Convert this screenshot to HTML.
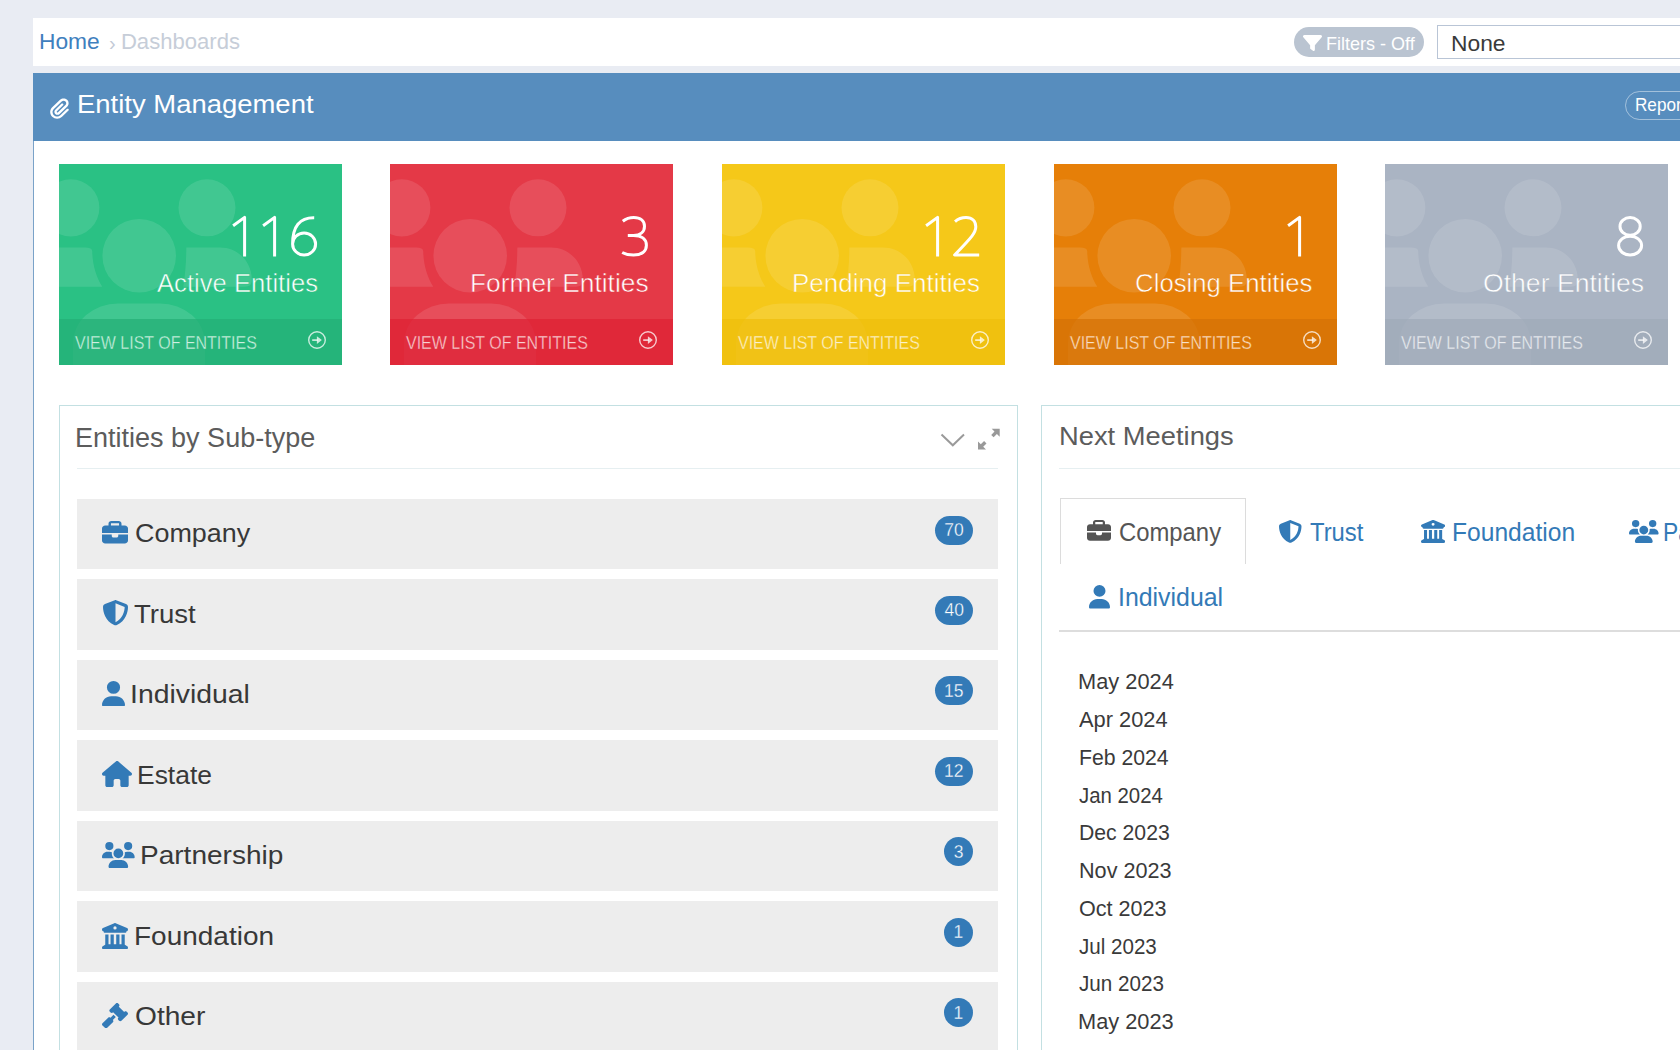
<!DOCTYPE html>
<html><head><meta charset="utf-8"><style>
html,body{margin:0;padding:0;}
body{width:1680px;height:1050px;overflow:hidden;position:relative;background:#e9ecf3;font-family:"Liberation Sans",sans-serif;}
.t{position:absolute;white-space:nowrap;}
</style></head><body>
<div style="position:absolute;left:33px;top:18px;width:1647px;height:48px;background:#fff"></div>
<div class="t" style="left:38.68px;top:30.80px;font-size:22.09px;line-height:22.09px;color:#3f80be;font-weight:400;transform:scaleX(1.0318);transform-origin:0 0;">Home</div>
<div class="t" style="left:109.10px;top:32.57px;font-size:20.00px;line-height:20.00px;color:#c3cad6;font-weight:400;">›</div>
<div class="t" style="left:120.93px;top:30.80px;font-size:22.09px;line-height:22.09px;color:#c6cdd8;font-weight:400;">Dashboards</div>
<div style="position:absolute;left:1294px;top:27px;width:130px;height:30px;background:#bac4d1;border-radius:15px"></div>
<svg style="position:absolute;left:1303px;top:35px;" width="19" height="16" viewBox="0 32 512 448" preserveAspectRatio="none"><path fill="#fff" d="M3.9 54.9C10.5 40.9 24.5 32 40 32H472c15.5 0 29.5 8.9 36.1 22.9s4.6 30.5-5.2 42.5L320 320.9V448c0 12.1-6.8 23.2-17.7 28.6s-23.8 4.3-33.5-3l-64-48c-8.1-6-12.8-15.5-12.8-25.6V320.9L9 97.3C-.7 85.4-2.8 68.8 3.9 54.9z"/></svg>
<div class="t" style="left:1326.16px;top:33.88px;font-size:19.04px;line-height:19.04px;color:#fff;font-weight:400;transform:scaleX(0.9464);transform-origin:0 0;">Filters - Off</div>
<div style="position:absolute;left:1437px;top:25px;width:260px;height:34px;background:#fff;border:1px solid #b9c5d6;box-sizing:border-box"></div>
<div class="t" style="left:1451.27px;top:32.53px;font-size:22.53px;line-height:22.53px;color:#3a3a3a;font-weight:400;transform:scaleX(1.0132);transform-origin:0 0;">None</div>
<div style="position:absolute;left:33px;top:73px;width:1660px;height:1000px;background:#fff;border-left:1px solid #7aa2c8;box-sizing:border-box"></div>
<div style="position:absolute;left:33px;top:73px;width:1660px;height:68px;background:#578dbe"></div>
<svg style="position:absolute;left:50.3px;top:97.6px;" width="19" height="21" viewBox="0 0 448 512" preserveAspectRatio="none"><path fill="#fff" d="M364.2 83.8c-24.4-24.4-64-24.4-88.4 0l-184 184c-42.1 42.1-42.1 110.3 0 152.4s110.3 42.1 152.4 0l152-152c10.9-10.9 28.7-10.9 39.6 0s10.9 28.7 0 39.6l-152 152c-64 64-167.6 64-231.6 0s-64-167.6 0-231.6l184-184c46.3-46.3 121.3-46.3 167.6 0s46.3 121.3 0 167.6l-176 176c-28.6 28.6-75 28.6-103.6 0s-28.6-75 0-103.6l144-144c10.9-10.9 28.7-10.9 39.6 0s10.9 28.7 0 39.6l-144 144c-6.7 6.7-6.7 17.7 0 24.4s17.7 6.7 24.4 0l176-176c24.4-24.4 24.4-64 0-88.4z"/></svg>
<div class="t" style="left:77.20px;top:91.65px;font-size:25.58px;line-height:25.58px;color:#fff;font-weight:400;transform:scaleX(1.0733);transform-origin:0 0;">Entity Management</div>
<div style="position:absolute;left:1625px;top:91px;width:120px;height:29px;border:1px solid rgba(255,255,255,.45);border-radius:15px;box-sizing:border-box"></div>
<div class="t" style="left:1635.13px;top:95.38px;font-size:19.04px;line-height:19.04px;color:#fff;font-weight:400;transform:scaleX(0.9000);transform-origin:0 0;">Report</div>
<div style="position:absolute;left:59px;top:164px;width:283px;height:201px;background:#2ac184;overflow:hidden"><svg style="position:absolute;left:0;top:0" width="283" height="201" viewBox="0 0 283 201"><circle cx="11.8" cy="43.8" r="28.6" fill="rgba(255,255,255,0.11)"/><circle cx="148" cy="43.8" r="28.5" fill="rgba(255,255,255,0.11)"/><circle cx="80.2" cy="91.8" r="36.8" fill="rgba(255,255,255,0.11)"/><path fill="rgba(255,255,255,0.11)" d="M-60 83.5H26Q33.2 83.5 33.2 87C33.4 100 37 113 43.3 122.7H-60Z"/><path fill="rgba(255,255,255,0.11)" d="M127.3 83.5H161C180 83.5 192.8 99 192.8 115V116.5Q192.8 122.7 186 122.7H124.3C126.3 110 127.3 97 127.3 83.5Z"/><path fill="rgba(255,255,255,0.11)" d="M14 260V179.4A45 40 0 0 1 59 139.4H101A45 40 0 0 1 146 179.4V260Z"/></svg><div style="position:absolute;left:0;top:155px;width:283px;height:46px;background:rgba(36,174,118,0.72)"></div></div>
<div class="t" style="left:156.70px;top:271.02px;font-size:25.73px;line-height:25.73px;color:#fff;font-weight:400;transform:scaleX(0.9965);transform-origin:0 0;-webkit-text-stroke:0.5px #2ac184;">Active Entities</div>
<div class="t" style="left:74.92px;top:333.55px;font-size:18.60px;line-height:18.60px;color:rgba(255,255,255,0.8);font-weight:400;transform:scaleX(0.8600);transform-origin:0 0;-webkit-text-stroke:0.4px #2ac184;">VIEW LIST OF ENTITIES</div>
<svg style="position:absolute;left:307px;top:329.8px;" width="20" height="20" viewBox="0 0 20 20" preserveAspectRatio="none"><circle cx="10" cy="10" r="8.3" fill="none" stroke="rgba(255,255,255,0.75)" stroke-width="1.4"/><path d="M5.2 10.1H10.8" stroke="rgba(255,255,255,0.75)" stroke-width="1.7"/><path d="M9.9 6.3L14.9 10.1L9.9 14.1Z" fill="rgba(255,255,255,0.75)"/></svg>
<div style="position:absolute;left:390px;top:164px;width:282.5px;height:201px;background:#e43947;overflow:hidden"><svg style="position:absolute;left:0;top:0" width="283" height="201" viewBox="0 0 283 201"><circle cx="11.8" cy="43.8" r="28.6" fill="rgba(255,255,255,0.11)"/><circle cx="148" cy="43.8" r="28.5" fill="rgba(255,255,255,0.11)"/><circle cx="80.2" cy="91.8" r="36.8" fill="rgba(255,255,255,0.11)"/><path fill="rgba(255,255,255,0.11)" d="M-60 83.5H26Q33.2 83.5 33.2 87C33.4 100 37 113 43.3 122.7H-60Z"/><path fill="rgba(255,255,255,0.11)" d="M127.3 83.5H161C180 83.5 192.8 99 192.8 115V116.5Q192.8 122.7 186 122.7H124.3C126.3 110 127.3 97 127.3 83.5Z"/><path fill="rgba(255,255,255,0.11)" d="M14 260V179.4A45 40 0 0 1 59 139.4H101A45 40 0 0 1 146 179.4V260Z"/></svg><div style="position:absolute;left:0;top:155px;width:283px;height:46px;background:rgba(222,33,53,0.72)"></div></div>
<div class="t" style="left:470.29px;top:271.02px;font-size:25.73px;line-height:25.73px;color:#fff;font-weight:400;transform:scaleX(1.0241);transform-origin:0 0;-webkit-text-stroke:0.5px #e43947;">Former Entities</div>
<div class="t" style="left:405.92px;top:333.55px;font-size:18.60px;line-height:18.60px;color:rgba(255,255,255,0.8);font-weight:400;transform:scaleX(0.8600);transform-origin:0 0;-webkit-text-stroke:0.4px #e43947;">VIEW LIST OF ENTITIES</div>
<svg style="position:absolute;left:638px;top:329.8px;" width="20" height="20" viewBox="0 0 20 20" preserveAspectRatio="none"><circle cx="10" cy="10" r="8.3" fill="none" stroke="rgba(255,255,255,0.75)" stroke-width="1.4"/><path d="M5.2 10.1H10.8" stroke="rgba(255,255,255,0.75)" stroke-width="1.7"/><path d="M9.9 6.3L14.9 10.1L9.9 14.1Z" fill="rgba(255,255,255,0.75)"/></svg>
<div style="position:absolute;left:722px;top:164px;width:283px;height:201px;background:#f5c819;overflow:hidden"><svg style="position:absolute;left:0;top:0" width="283" height="201" viewBox="0 0 283 201"><circle cx="11.8" cy="43.8" r="28.6" fill="rgba(255,255,255,0.11)"/><circle cx="148" cy="43.8" r="28.5" fill="rgba(255,255,255,0.11)"/><circle cx="80.2" cy="91.8" r="36.8" fill="rgba(255,255,255,0.11)"/><path fill="rgba(255,255,255,0.11)" d="M-60 83.5H26Q33.2 83.5 33.2 87C33.4 100 37 113 43.3 122.7H-60Z"/><path fill="rgba(255,255,255,0.11)" d="M127.3 83.5H161C180 83.5 192.8 99 192.8 115V116.5Q192.8 122.7 186 122.7H124.3C126.3 110 127.3 97 127.3 83.5Z"/><path fill="rgba(255,255,255,0.11)" d="M14 260V179.4A45 40 0 0 1 59 139.4H101A45 40 0 0 1 146 179.4V260Z"/></svg><div style="position:absolute;left:0;top:155px;width:283px;height:46px;background:rgba(238,190,11,0.72)"></div></div>
<div class="t" style="left:792.32px;top:271.02px;font-size:25.73px;line-height:25.73px;color:#fff;font-weight:400;transform:scaleX(1.0108);transform-origin:0 0;-webkit-text-stroke:0.5px #f5c819;">Pending Entities</div>
<div class="t" style="left:737.92px;top:333.55px;font-size:18.60px;line-height:18.60px;color:rgba(255,255,255,0.8);font-weight:400;transform:scaleX(0.8600);transform-origin:0 0;-webkit-text-stroke:0.4px #f5c819;">VIEW LIST OF ENTITIES</div>
<svg style="position:absolute;left:970px;top:329.8px;" width="20" height="20" viewBox="0 0 20 20" preserveAspectRatio="none"><circle cx="10" cy="10" r="8.3" fill="none" stroke="rgba(255,255,255,0.75)" stroke-width="1.4"/><path d="M5.2 10.1H10.8" stroke="rgba(255,255,255,0.75)" stroke-width="1.7"/><path d="M9.9 6.3L14.9 10.1L9.9 14.1Z" fill="rgba(255,255,255,0.75)"/></svg>
<div style="position:absolute;left:1054px;top:164px;width:283px;height:201px;background:#e67f08;overflow:hidden"><svg style="position:absolute;left:0;top:0" width="283" height="201" viewBox="0 0 283 201"><circle cx="11.8" cy="43.8" r="28.6" fill="rgba(255,255,255,0.11)"/><circle cx="148" cy="43.8" r="28.5" fill="rgba(255,255,255,0.11)"/><circle cx="80.2" cy="91.8" r="36.8" fill="rgba(255,255,255,0.11)"/><path fill="rgba(255,255,255,0.11)" d="M-60 83.5H26Q33.2 83.5 33.2 87C33.4 100 37 113 43.3 122.7H-60Z"/><path fill="rgba(255,255,255,0.11)" d="M127.3 83.5H161C180 83.5 192.8 99 192.8 115V116.5Q192.8 122.7 186 122.7H124.3C126.3 110 127.3 97 127.3 83.5Z"/><path fill="rgba(255,255,255,0.11)" d="M14 260V179.4A45 40 0 0 1 59 139.4H101A45 40 0 0 1 146 179.4V260Z"/></svg><div style="position:absolute;left:0;top:155px;width:283px;height:46px;background:rgba(212,114,5,0.72)"></div></div>
<div class="t" style="left:1135.12px;top:271.02px;font-size:25.73px;line-height:25.73px;color:#fff;font-weight:400;-webkit-text-stroke:0.5px #e67f08;">Closing Entities</div>
<div class="t" style="left:1069.92px;top:333.55px;font-size:18.60px;line-height:18.60px;color:rgba(255,255,255,0.8);font-weight:400;transform:scaleX(0.8600);transform-origin:0 0;-webkit-text-stroke:0.4px #e67f08;">VIEW LIST OF ENTITIES</div>
<svg style="position:absolute;left:1302px;top:329.8px;" width="20" height="20" viewBox="0 0 20 20" preserveAspectRatio="none"><circle cx="10" cy="10" r="8.3" fill="none" stroke="rgba(255,255,255,0.75)" stroke-width="1.4"/><path d="M5.2 10.1H10.8" stroke="rgba(255,255,255,0.75)" stroke-width="1.7"/><path d="M9.9 6.3L14.9 10.1L9.9 14.1Z" fill="rgba(255,255,255,0.75)"/></svg>
<div style="position:absolute;left:1385px;top:164px;width:283px;height:201px;background:#aab4c3;overflow:hidden"><svg style="position:absolute;left:0;top:0" width="283" height="201" viewBox="0 0 283 201"><circle cx="11.8" cy="43.8" r="28.6" fill="rgba(255,255,255,0.11)"/><circle cx="148" cy="43.8" r="28.5" fill="rgba(255,255,255,0.11)"/><circle cx="80.2" cy="91.8" r="36.8" fill="rgba(255,255,255,0.11)"/><path fill="rgba(255,255,255,0.11)" d="M-60 83.5H26Q33.2 83.5 33.2 87C33.4 100 37 113 43.3 122.7H-60Z"/><path fill="rgba(255,255,255,0.11)" d="M127.3 83.5H161C180 83.5 192.8 99 192.8 115V116.5Q192.8 122.7 186 122.7H124.3C126.3 110 127.3 97 127.3 83.5Z"/><path fill="rgba(255,255,255,0.11)" d="M14 260V179.4A45 40 0 0 1 59 139.4H101A45 40 0 0 1 146 179.4V260Z"/></svg><div style="position:absolute;left:0;top:155px;width:283px;height:46px;background:rgba(159,170,185,0.72)"></div></div>
<div class="t" style="left:1483.00px;top:271.02px;font-size:25.73px;line-height:25.73px;color:#fff;font-weight:400;transform:scaleX(1.0342);transform-origin:0 0;-webkit-text-stroke:0.5px #aab4c3;">Other Entities</div>
<div class="t" style="left:1400.92px;top:333.55px;font-size:18.60px;line-height:18.60px;color:rgba(255,255,255,0.8);font-weight:400;transform:scaleX(0.8600);transform-origin:0 0;-webkit-text-stroke:0.4px #aab4c3;">VIEW LIST OF ENTITIES</div>
<svg style="position:absolute;left:1633px;top:329.8px;" width="20" height="20" viewBox="0 0 20 20" preserveAspectRatio="none"><circle cx="10" cy="10" r="8.3" fill="none" stroke="rgba(255,255,255,0.75)" stroke-width="1.4"/><path d="M5.2 10.1H10.8" stroke="rgba(255,255,255,0.75)" stroke-width="1.7"/><path d="M9.9 6.3L14.9 10.1L9.9 14.1Z" fill="rgba(255,255,255,0.75)"/></svg>
<svg style="position:absolute;left:230.10px;top:214.00px" width="32" height="46" viewBox="-2 -2 32 46"><path d="M1.1 9.8L12.6 1.4V40.6" fill="none" stroke="#fff" stroke-width="3.0" stroke-linejoin="round"/></svg>
<svg style="position:absolute;left:260.20px;top:214.00px" width="32" height="46" viewBox="-2 -2 32 46"><path d="M1.1 9.8L12.6 1.4V40.6" fill="none" stroke="#fff" stroke-width="3.0" stroke-linejoin="round"/></svg>
<svg style="position:absolute;left:288.50px;top:214.00px" width="32" height="46" viewBox="-2 -2 32 46"><path d="M23.2 1.7C8.5 1.5 1.6 10.5 1.6 28.0M1.6 28.0A11.5 11.0 0 1 0 24.6 28.0A11.5 11.0 0 1 0 1.6 28.0" fill="none" stroke="#fff" stroke-width="3.0" stroke-linejoin="round"/></svg>
<svg style="position:absolute;left:618.60px;top:214.00px" width="32" height="46" viewBox="-2 -2 32 46"><path d="M1.8 5.3C5.0 2.8 8.5 1.6 12.8 1.6C19.5 1.6 23.5 5.0 23.5 10.3C23.5 15.8 19.3 19.4 12.5 19.4H6.8M12.5 19.4C21.0 19.4 25.4 23.5 25.4 29.2C25.4 35.5 20.5 39.0 12.5 39.0C8.0 39.0 4.3 38.2 1.2 36.5" fill="none" stroke="#fff" stroke-width="3.0" stroke-linejoin="round"/></svg>
<svg style="position:absolute;left:923.30px;top:214.00px" width="32" height="46" viewBox="-2 -2 32 46"><path d="M1.1 9.8L12.6 1.4V40.6" fill="none" stroke="#fff" stroke-width="3.0" stroke-linejoin="round"/></svg>
<svg style="position:absolute;left:950.70px;top:214.00px" width="32" height="46" viewBox="-2 -2 32 46"><path d="M2.0 5.6C5.0 3.0 8.8 1.6 13.0 1.6C19.3 1.6 22.8 5.3 22.8 10.8C22.8 16.5 19.5 20.5 1.6 39.0H26.2" fill="none" stroke="#fff" stroke-width="3.0" stroke-linejoin="round"/></svg>
<svg style="position:absolute;left:1285.30px;top:214.00px" width="32" height="46" viewBox="-2 -2 32 46"><path d="M1.1 9.8L12.6 1.4V40.6" fill="none" stroke="#fff" stroke-width="3.0" stroke-linejoin="round"/></svg>
<svg style="position:absolute;left:1615.00px;top:214.00px" width="32" height="46" viewBox="-2 -2 32 46"><path d="M13.1 1.6A10.1 8.8 0 1 1 13.1 19.2A10.1 8.8 0 1 1 13.1 1.6M13.1 20.2A11.5 9.4 0 1 1 13.1 39.0A11.5 9.4 0 1 1 13.1 20.2" fill="none" stroke="#fff" stroke-width="3.0" stroke-linejoin="round"/></svg>
<div style="position:absolute;left:59px;top:405px;width:959px;height:700px;border:1px solid #c3e0e2;box-sizing:border-box;background:#fff"></div>
<div class="t" style="left:74.84px;top:422.51px;font-size:28.34px;line-height:28.34px;color:#5c5c5c;font-weight:400;transform:scaleX(0.9535);transform-origin:0 0;">Entities by Sub-type</div>
<div style="position:absolute;left:77px;top:468px;width:921px;height:1px;background:#e6eff1"></div>
<svg style="position:absolute;left:938px;top:430px;" width="30" height="20" viewBox="938 430 30 20" preserveAspectRatio="none"><path d="M941.5 434.5L952.8 445.3L964 434.5" fill="none" stroke="#9a9a9a" stroke-width="2"/></svg>
<svg style="position:absolute;left:976px;top:426px;" width="26" height="26" viewBox="976 426 26 26" preserveAspectRatio="none"><path fill="#999" d="M978 441.5V449.5H986L983.2 446.7L986.5 443.4L984.1 441L980.8 444.3Z M999.7 428.8V436.8L996.9 434L993.6 437.3L991.2 434.9L994.5 431.6L991.7 428.8Z"/></svg>
<div style="position:absolute;left:77px;top:499.00px;width:921px;height:70.4px;background:#ededed"></div>
<svg style="position:absolute;left:102px;top:521px;" width="26" height="24" viewBox="0 0 512 512" preserveAspectRatio="none"><path fill="#337ab7" d="M184 48H328c4.4 0 8 3.6 8 8V96H176V56c0-4.4 3.6-8 8-8zm-56 8V96H64C28.7 96 0 124.7 0 160v96H192 320 512V160c0-35.3-28.7-64-64-64H384V56c0-30.9-25.1-56-56-56H184c-30.9 0-56 25.1-56 56zM512 288H320v32c0 17.7-14.3 32-32 32H224c-17.7 0-32-14.3-32-32V288H0V416c0 35.3 28.7 64 64 64H448c35.3 0 64-28.7 64-64V288z"/></svg>
<div class="t" style="left:134.85px;top:520.43px;font-size:26.60px;line-height:26.60px;color:#383838;font-weight:400;transform:scaleX(1.0114);transform-origin:0 0;">Company</div>
<div style="position:absolute;left:935px;top:515.5px;width:38px;height:29px;border-radius:14.5px;background:#337ab7"></div>
<div class="t" style="left:944.16px;top:521.89px;font-size:17.50px;line-height:17.50px;color:#fff;font-weight:400;-webkit-text-stroke:0.3px #337ab7;">70</div>
<div style="position:absolute;left:77px;top:579.45px;width:921px;height:70.4px;background:#ededed"></div>
<svg style="position:absolute;left:102.5px;top:600px;" width="25" height="25.5" viewBox="16 0 480 512" preserveAspectRatio="none"><path fill="#337ab7" d="M256 0c4.6 0 9.2 1 13.4 2.9L457.7 82.8c22 9.3 38.4 31 38.3 57.2c-.5 99.2-41.3 280.7-213.6 363.2c-16.7 8-36.1 8-52.8 0C57.3 420.7 16.5 239.2 16 140c-.1-26.2 16.3-47.9 38.3-57.2L242.7 2.9C246.8 1 251.4 0 256 0zm0 66.8V444.8C394 378 431.1 230.1 432 141.4L256 66.8l0 0z"/></svg>
<div class="t" style="left:134.45px;top:600.88px;font-size:26.60px;line-height:26.60px;color:#383838;font-weight:400;transform:scaleX(1.0354);transform-origin:0 0;">Trust</div>
<div style="position:absolute;left:935px;top:596.0px;width:38px;height:29px;border-radius:14.5px;background:#337ab7"></div>
<div class="t" style="left:944.42px;top:602.34px;font-size:17.50px;line-height:17.50px;color:#fff;font-weight:400;-webkit-text-stroke:0.3px #337ab7;">40</div>
<div style="position:absolute;left:77px;top:659.90px;width:921px;height:70.4px;background:#ededed"></div>
<svg style="position:absolute;left:102px;top:680.7px;" width="23" height="25.5" viewBox="0 0 448 512" preserveAspectRatio="none"><path fill="#337ab7" d="M224 256A128 128 0 1 0 224 0a128 128 0 1 0 0 256zm-45.7 48C79.8 304 0 383.8 0 482.3C0 498.7 13.3 512 29.7 512H418.3c16.4 0 29.7-13.3 29.7-29.7C448 383.8 368.2 304 269.7 304H178.3z"/></svg>
<div class="t" style="left:130.35px;top:681.33px;font-size:26.60px;line-height:26.60px;color:#383838;font-weight:400;transform:scaleX(1.0660);transform-origin:0 0;">Individual</div>
<div style="position:absolute;left:935px;top:676.4px;width:38px;height:29px;border-radius:14.5px;background:#337ab7"></div>
<div class="t" style="left:943.98px;top:682.79px;font-size:17.50px;line-height:17.50px;color:#fff;font-weight:400;-webkit-text-stroke:0.3px #337ab7;">15</div>
<div style="position:absolute;left:77px;top:740.35px;width:921px;height:70.4px;background:#ededed"></div>
<svg style="position:absolute;left:102px;top:761.3px;" width="30" height="26.2" viewBox="0 0 576 512" preserveAspectRatio="none"><path fill="#337ab7" d="M575.8 255.5c0 18-15 32.1-32 32.1h-32l.7 160.2c0 2.7-.2 5.4-.5 8.1V472c0 22.1-17.9 40-40 40H456c-1.1 0-2.2 0-3.3-.1c-1.4 .1-2.8 .1-4.2 .1H416 392c-22.1 0-40-17.9-40-40V448 384c0-17.7-14.3-32-32-32H256c-17.7 0-32 14.3-32 32v64 24c0 22.1-17.9 40-40 40H160 128.1c-1.5 0-3-.1-4.5-.2c-1.2 .1-2.4 .2-3.6 .2H104c-22.1 0-40-17.9-40-40V360c0-.9 0-1.9 .1-2.8V287.6H32c-18 0-32-14-32-32.1c0-9 3-17 10-24L266.4 8c7-7 15-8 22-8s15 2 21 7L564.8 231.5c8 7 12 15 11 24z"/></svg>
<div class="t" style="left:137.48px;top:761.78px;font-size:26.60px;line-height:26.60px;color:#383838;font-weight:400;transform:scaleX(0.9947);transform-origin:0 0;">Estate</div>
<div style="position:absolute;left:935px;top:756.9px;width:38px;height:29px;border-radius:14.5px;background:#337ab7"></div>
<div class="t" style="left:944.07px;top:763.24px;font-size:17.50px;line-height:17.50px;color:#fff;font-weight:400;-webkit-text-stroke:0.3px #337ab7;">12</div>
<div style="position:absolute;left:77px;top:820.80px;width:921px;height:70.4px;background:#ededed"></div>
<svg style="position:absolute;left:102px;top:841.7px;" width="32.7" height="26" viewBox="0 0 640 512" preserveAspectRatio="none"><path fill="#337ab7" d="M144 0a80 80 0 1 1 0 160A80 80 0 1 1 144 0zM512 0a80 80 0 1 1 0 160A80 80 0 1 1 512 0zM0 298.7C0 239.8 47.8 192 106.7 192h42.7c15.9 0 31 3.5 44.6 9.7c-1.3 7.2-1.9 14.7-1.9 22.3c0 38.2 16.8 72.5 43.3 96c-.2 0-.4 0-.7 0H21.3C9.6 320 0 310.4 0 298.7zM405.3 320c-.2 0-.4 0-.7 0c26.6-23.5 43.3-57.8 43.3-96c0-7.6-.7-15-1.9-22.3c13.6-6.3 28.7-9.7 44.6-9.7h42.7C592.2 192 640 239.8 640 298.7c0 11.8-9.6 21.3-21.3 21.3H405.3zM224 224a96 96 0 1 1 192 0 96 96 0 1 1 -192 0zM128 485.3C128 411.7 187.7 352 261.3 352H378.7C452.3 352 512 411.7 512 485.3c0 14.7-11.9 26.7-26.7 26.7H154.7c-14.7 0-26.7-11.9-26.7-26.7z"/></svg>
<div class="t" style="left:140.46px;top:842.23px;font-size:26.60px;line-height:26.60px;color:#383838;font-weight:400;transform:scaleX(1.0537);transform-origin:0 0;">Partnership</div>
<div style="position:absolute;left:944px;top:837.3px;width:29px;height:29px;border-radius:14.5px;background:#337ab7"></div>
<div class="t" style="left:953.64px;top:843.69px;font-size:17.50px;line-height:17.50px;color:#fff;font-weight:400;-webkit-text-stroke:0.3px #337ab7;">3</div>
<div style="position:absolute;left:77px;top:901.25px;width:921px;height:70.4px;background:#ededed"></div>
<svg style="position:absolute;left:102px;top:922.7px;" width="26" height="26.3" viewBox="0 0 512 512" preserveAspectRatio="none"><path fill="#337ab7" d="M243.4 2.6l-224 96c-14 6-21.8 21-18.7 35.8S16.8 160 32 160v8c0 13.3 10.7 24 24 24H456c13.3 0 24-10.7 24-24v-8c15.2 0 28.3-10.7 31.3-25.6s-4.8-29.9-18.7-35.8l-224-96c-8-3.4-17.2-3.4-25.2 0zM128 224H64V420.3c-.6 .3-1.2 .7-1.8 1.1l-48 32c-11.7 7.8-17 22.4-12.9 35.9S17.9 512 32 512H480c14.1 0 26.5-9.2 30.6-22.7s-1.1-28.1-12.9-35.9l-48-32c-.6-.4-1.2-.7-1.8-1.1V224H384V416H344V224H280V416H232V224H168V416H128V224zM256 64a32 32 0 1 1 0 64 32 32 0 1 1 0-64z"/></svg>
<div class="t" style="left:134.46px;top:922.68px;font-size:26.60px;line-height:26.60px;color:#383838;font-weight:400;transform:scaleX(1.0521);transform-origin:0 0;">Foundation</div>
<div style="position:absolute;left:944px;top:917.8px;width:29px;height:29px;border-radius:14.5px;background:#337ab7"></div>
<div class="t" style="left:953.38px;top:924.14px;font-size:17.50px;line-height:17.50px;color:#fff;font-weight:400;-webkit-text-stroke:0.3px #337ab7;">1</div>
<div style="position:absolute;left:77px;top:981.70px;width:921px;height:70.4px;background:#ededed"></div>
<svg style="position:absolute;left:102px;top:1003px;" width="26" height="25.3" viewBox="0 0 512 512" preserveAspectRatio="none"><path fill="#337ab7" d="M318.6 9.4c-12.5-12.5-32.8-12.5-45.3 0l-120 120c-12.5 12.5-12.5 32.8 0 45.3l16 16c12.5 12.5 32.8 12.5 45.3 0l4-4L325.4 293.4l-4 4c-12.5 12.5-12.5 32.8 0 45.3l16 16c12.5 12.5 32.8 12.5 45.3 0l120-120c12.5-12.5 12.5-32.8 0-45.3l-16-16c-12.5-12.5-32.8-12.5-45.3 0l-4 4L330.6 74.6l4-4c12.5-12.5 12.5-32.8 0-45.3l-16-16zm-152 288c-12.5-12.5-32.8-12.5-45.3 0l-112 112c-12.5 12.5-12.5 32.8 0 45.3l48 48c12.5 12.5 32.8 12.5 45.3 0l112-112c12.5-12.5 12.5-32.8 0-45.3l-1.4-1.4L272 285.3 226.7 240 168 298.6l-1.4-1.4z"/></svg>
<div class="t" style="left:134.73px;top:1003.13px;font-size:26.60px;line-height:26.60px;color:#383838;font-weight:400;transform:scaleX(1.0585);transform-origin:0 0;">Other</div>
<div style="position:absolute;left:944px;top:998.2px;width:29px;height:29px;border-radius:14.5px;background:#337ab7"></div>
<div class="t" style="left:953.38px;top:1004.59px;font-size:17.50px;line-height:17.50px;color:#fff;font-weight:400;-webkit-text-stroke:0.3px #337ab7;">1</div>
<div style="position:absolute;left:1041px;top:405px;width:700px;height:700px;border:1px solid #c3e0e2;box-sizing:border-box;background:#fff"></div>
<div class="t" style="left:1059.21px;top:424.00px;font-size:25.87px;line-height:25.87px;color:#5c5c5c;font-weight:400;transform:scaleX(1.0570);transform-origin:0 0;">Next Meetings</div>
<div style="position:absolute;left:1059px;top:468px;width:640px;height:1px;background:#e6eff1"></div>
<div style="position:absolute;left:1059.5px;top:498px;width:186.5px;height:66px;border:1px solid #dcdcdc;border-bottom:none;box-sizing:border-box;background:#fff"></div>
<svg style="position:absolute;left:1087.3px;top:519.9px;" width="24" height="22.1" viewBox="0 0 512 512" preserveAspectRatio="none"><path fill="#555" d="M184 48H328c4.4 0 8 3.6 8 8V96H176V56c0-4.4 3.6-8 8-8zm-56 8V96H64C28.7 96 0 124.7 0 160v96H192 320 512V160c0-35.3-28.7-64-64-64H384V56c0-30.9-25.1-56-56-56H184c-30.9 0-56 25.1-56 56zM512 288H320v32c0 17.7-14.3 32-32 32H224c-17.7 0-32-14.3-32-32V288H0V416c0 35.3 28.7 64 64 64H448c35.3 0 64-28.7 64-64V288z"/></svg>
<div class="t" style="left:1118.91px;top:520.29px;font-size:25.29px;line-height:25.29px;color:#555;font-weight:400;transform:scaleX(0.9432);transform-origin:0 0;">Company</div>
<svg style="position:absolute;left:1279px;top:520px;" width="22.5" height="23" viewBox="16 0 480 512" preserveAspectRatio="none"><path fill="#337ab7" d="M256 0c4.6 0 9.2 1 13.4 2.9L457.7 82.8c22 9.3 38.4 31 38.3 57.2c-.5 99.2-41.3 280.7-213.6 363.2c-16.7 8-36.1 8-52.8 0C57.3 420.7 16.5 239.2 16 140c-.1-26.2 16.3-47.9 38.3-57.2L242.7 2.9C246.8 1 251.4 0 256 0zm0 66.8V444.8C394 378 431.1 230.1 432 141.4L256 66.8l0 0z"/></svg>
<div class="t" style="left:1310.42px;top:520.29px;font-size:25.29px;line-height:25.29px;color:#337ab7;font-weight:400;transform:scaleX(0.9425);transform-origin:0 0;">Trust</div>
<svg style="position:absolute;left:1420.8px;top:520px;" width="24.2" height="23" viewBox="0 0 512 512" preserveAspectRatio="none"><path fill="#337ab7" d="M243.4 2.6l-224 96c-14 6-21.8 21-18.7 35.8S16.8 160 32 160v8c0 13.3 10.7 24 24 24H456c13.3 0 24-10.7 24-24v-8c15.2 0 28.3-10.7 31.3-25.6s-4.8-29.9-18.7-35.8l-224-96c-8-3.4-17.2-3.4-25.2 0zM128 224H64V420.3c-.6 .3-1.2 .7-1.8 1.1l-48 32c-11.7 7.8-17 22.4-12.9 35.9S17.9 512 32 512H480c14.1 0 26.5-9.2 30.6-22.7s-1.1-28.1-12.9-35.9l-48-32c-.6-.4-1.2-.7-1.8-1.1V224H384V416H344V224H280V416H232V224H168V416H128V224zM256 64a32 32 0 1 1 0 64 32 32 0 1 1 0-64z"/></svg>
<div class="t" style="left:1452.23px;top:519.99px;font-size:25.29px;line-height:25.29px;color:#337ab7;font-weight:400;transform:scaleX(0.9730);transform-origin:0 0;">Foundation</div>
<svg style="position:absolute;left:1629.2px;top:520px;" width="29.6" height="23" viewBox="0 0 640 512" preserveAspectRatio="none"><path fill="#337ab7" d="M144 0a80 80 0 1 1 0 160A80 80 0 1 1 144 0zM512 0a80 80 0 1 1 0 160A80 80 0 1 1 512 0zM0 298.7C0 239.8 47.8 192 106.7 192h42.7c15.9 0 31 3.5 44.6 9.7c-1.3 7.2-1.9 14.7-1.9 22.3c0 38.2 16.8 72.5 43.3 96c-.2 0-.4 0-.7 0H21.3C9.6 320 0 310.4 0 298.7zM405.3 320c-.2 0-.4 0-.7 0c26.6-23.5 43.3-57.8 43.3-96c0-7.6-.7-15-1.9-22.3c13.6-6.3 28.7-9.7 44.6-9.7h42.7C592.2 192 640 239.8 640 298.7c0 11.8-9.6 21.3-21.3 21.3H405.3zM224 224a96 96 0 1 1 192 0 96 96 0 1 1 -192 0zM128 485.3C128 411.7 187.7 352 261.3 352H378.7C452.3 352 512 411.7 512 485.3c0 14.7-11.9 26.7-26.7 26.7H154.7c-14.7 0-26.7-11.9-26.7-26.7z"/></svg>
<div class="t" style="left:1663.18px;top:519.99px;font-size:25.29px;line-height:25.29px;color:#337ab7;font-weight:400;transform:scaleX(0.9000);transform-origin:0 0;">Partnership</div>
<svg style="position:absolute;left:1089px;top:585.3px;" width="21" height="23.6" viewBox="0 0 448 512" preserveAspectRatio="none"><path fill="#337ab7" d="M224 256A128 128 0 1 0 224 0a128 128 0 1 0 0 256zm-45.7 48C79.8 304 0 383.8 0 482.3C0 498.7 13.3 512 29.7 512H418.3c16.4 0 29.7-13.3 29.7-29.7C448 383.8 368.2 304 269.7 304H178.3z"/></svg>
<div class="t" style="left:1118.46px;top:584.67px;font-size:25.44px;line-height:25.44px;color:#337ab7;font-weight:400;transform:scaleX(0.9775);transform-origin:0 0;">Individual</div>
<div style="position:absolute;left:1059px;top:630px;width:640px;height:1.5px;background:#dddddd"></div>
<div class="t" style="left:1078.25px;top:670.41px;font-size:22.67px;line-height:22.67px;color:#3a3a3a;font-weight:400;transform:scaleX(0.9624);transform-origin:0 0;">May 2024</div>
<div class="t" style="left:1079.10px;top:708.16px;font-size:22.67px;line-height:22.67px;color:#3a3a3a;font-weight:400;transform:scaleX(0.9630);transform-origin:0 0;">Apr 2024</div>
<div class="t" style="left:1078.60px;top:745.91px;font-size:22.67px;line-height:22.67px;color:#3a3a3a;font-weight:400;transform:scaleX(0.9367);transform-origin:0 0;">Feb 2024</div>
<div class="t" style="left:1078.69px;top:783.66px;font-size:22.67px;line-height:22.67px;color:#3a3a3a;font-weight:400;transform:scaleX(0.8994);transform-origin:0 0;">Jan 2024</div>
<div class="t" style="left:1078.60px;top:821.41px;font-size:22.67px;line-height:22.67px;color:#3a3a3a;font-weight:400;transform:scaleX(0.9351);transform-origin:0 0;">Dec 2023</div>
<div class="t" style="left:1078.57px;top:859.16px;font-size:22.67px;line-height:22.67px;color:#3a3a3a;font-weight:400;transform:scaleX(0.9541);transform-origin:0 0;">Nov 2023</div>
<div class="t" style="left:1078.73px;top:896.91px;font-size:22.67px;line-height:22.67px;color:#3a3a3a;font-weight:400;transform:scaleX(0.9520);transform-origin:0 0;">Oct 2023</div>
<div class="t" style="left:1078.69px;top:934.66px;font-size:22.67px;line-height:22.67px;color:#3a3a3a;font-weight:400;transform:scaleX(0.9081);transform-origin:0 0;">Jul 2023</div>
<div class="t" style="left:1078.69px;top:972.41px;font-size:22.67px;line-height:22.67px;color:#3a3a3a;font-weight:400;transform:scaleX(0.9114);transform-origin:0 0;">Jun 2023</div>
<div class="t" style="left:1078.26px;top:1010.16px;font-size:22.67px;line-height:22.67px;color:#3a3a3a;font-weight:400;transform:scaleX(0.9616);transform-origin:0 0;">May 2023</div>
</body></html>
